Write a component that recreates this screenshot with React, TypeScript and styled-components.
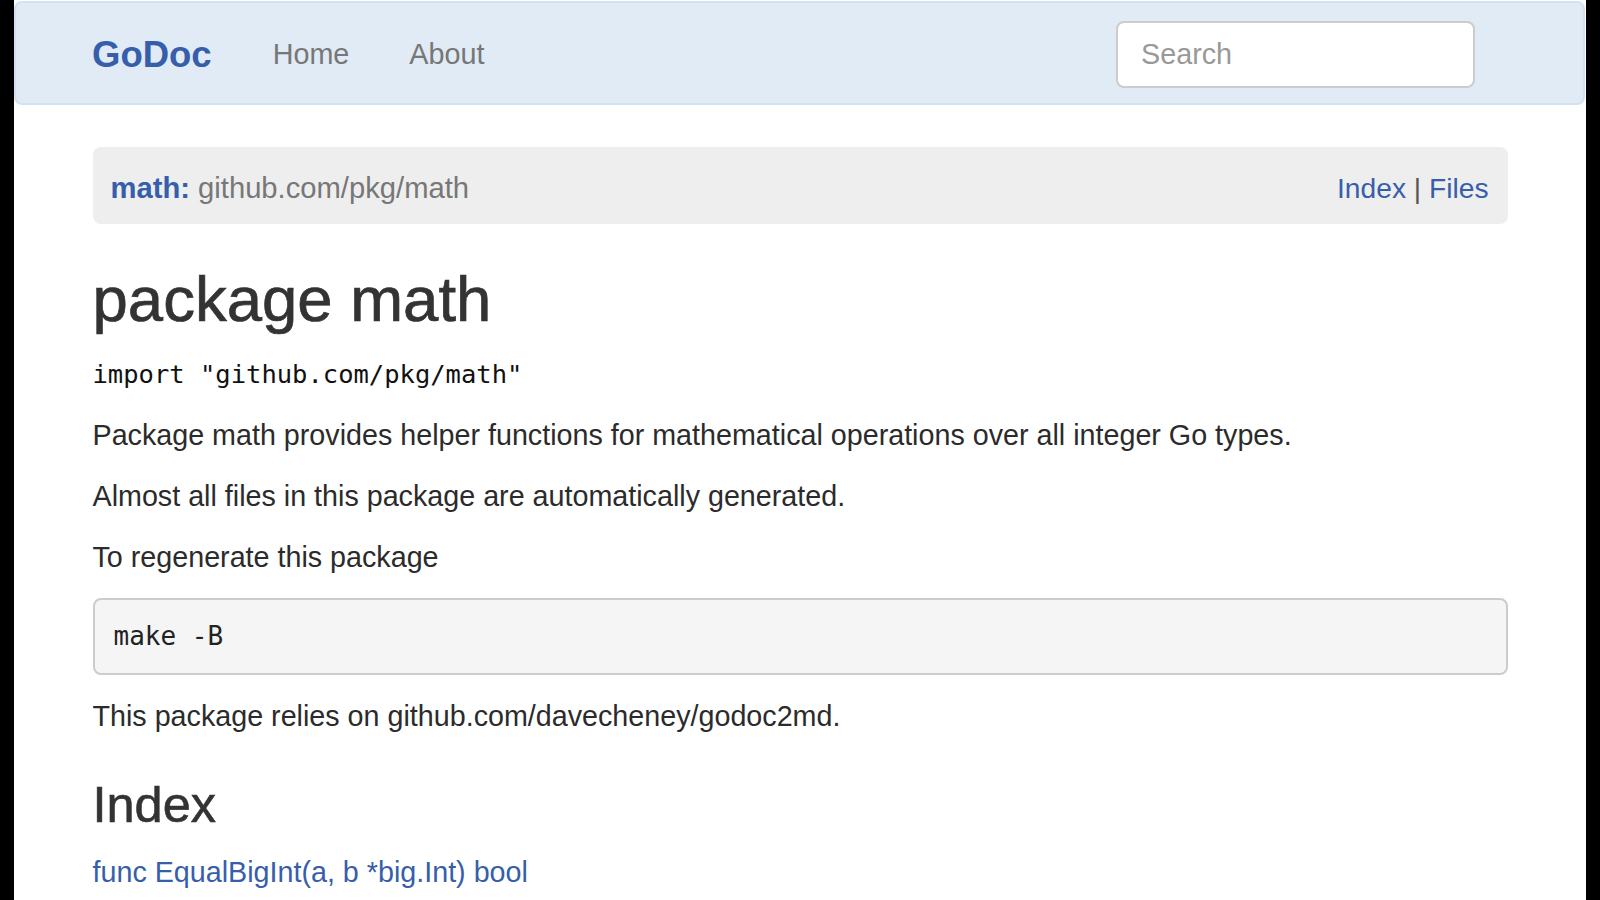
import React from 'react';
import styled, { createGlobalStyle } from 'styled-components';

const GlobalStyle = createGlobalStyle`
  html, body {
    margin: 0;
    padding: 0;
    background: #000;
  }
  body {
    font-family: "Liberation Sans", Helvetica, Arial, sans-serif;
    font-size: 28.7px;
    line-height: 41px;
    color: #333;
  }
  * { box-sizing: border-box; }
`;

const Page = styled.div`
  margin: 0 14px;
  background: #fff;
  height: 100vh;
  padding-top: 1px;
  overflow: hidden;
`;

const Navbar = styled.nav`
  height: 104px;
  background: #e0ebf5;
  border: 2px solid #d3e2f1;
  border-radius: 8px;
  margin: 0 1px 42px 0;
  display: flex;
`;

const NavContainer = styled.div`
  width: 1415px;
  margin: 0 auto;
  display: flex;
  align-items: center;
  padding-top: 2px;
`;

const Brand = styled.a`
  font-size: 36.5px;
  font-weight: 700;
  color: #375eab;
  text-decoration: none;
  margin-right: 61px;
`;

const NavLinks = styled.div`
  display: flex;
  gap: 60px;
`;

const NavLink = styled.a`
  color: #777;
  text-decoration: none;
  font-size: 28.75px;
`;

const SearchInput = styled.input`
  margin-left: auto;
  margin-right: 32px;
  width: 359px;
  height: 67px;
  border: 2px solid #ccc;
  border-radius: 8px;
  background: #fff;
  padding: 0 23px;
  font-family: inherit;
  font-size: 28.75px;
  color: #555;
  outline: none;
  &::placeholder {
    color: #999;
  }
`;

const Container = styled.div`
  width: 1415px;
  margin: 0 auto;
`;

const Crumb = styled.div`
  height: 77px;
  background: #eee;
  border-radius: 8px;
  padding: 5px 19px 0 18px;
  display: flex;
  align-items: center;
  justify-content: space-between;
  margin-bottom: 41px;
  font-size: 29.2px;
`;

const CrumbPath = styled.div`
  color: #777;
`;

const CrumbName = styled.a`
  color: #375eab;
  font-weight: 700;
  text-decoration: none;
`;

const CrumbLinks = styled.div`
  color: #555;
  font-size: 28.2px;
`;

const Link = styled.a`
  color: #375eab;
  text-decoration: none;
`;

const Title = styled.h2`
  font-size: 63.5px;
  line-height: 68px;
  font-weight: 500;
  -webkit-text-stroke: 0.7px #333;
  margin: 40px 0 20px;
  color: #333;
`;

const SectionTitle = styled.h3`
  font-size: 50.5px;
  line-height: 54px;
  font-weight: 500;
  -webkit-text-stroke: 0.6px #333;
  margin: 41px 0 20px;
  color: #333;
`;

const Para = styled.p`
  margin: 0 0 20px;
  color: #2b2b2b;
`;

const Code = styled.code`
  font-family: "DejaVu Sans Mono", Menlo, monospace;
  font-size: 25.5px;
  color: #111;
`;

const Pre = styled.pre`
  margin: 0 0 21px;
  padding: 18px 19px;
  border: 2px solid #ccc;
  border-radius: 8px;
  background: #f5f5f5;
  font-family: "DejaVu Sans Mono", Menlo, monospace;
  font-size: 26px;
  line-height: 37px;
  color: #222;
`;

const IndexList = styled.div`
  display: flex;
  flex-direction: column;
`;

const IndexLink = styled.a`
  color: #375eab;
  text-decoration: none;
  line-height: 41px;
`;

export default function App() {
  return (
    <>
      <GlobalStyle />
      <Page>
        <Navbar>
          <NavContainer>
            <Brand href="#">GoDoc</Brand>
            <NavLinks>
              <NavLink href="#">Home</NavLink>
              <NavLink href="#">About</NavLink>
            </NavLinks>
            <SearchInput placeholder="Search" />
          </NavContainer>
        </Navbar>
        <Container>
          <Crumb>
            <CrumbPath>
              <CrumbName href="#">math:</CrumbName> github.com/pkg/math
            </CrumbPath>
            <CrumbLinks>
              <Link href="#">Index</Link> | <Link href="#">Files</Link>
            </CrumbLinks>
          </Crumb>
          <Title>package math</Title>
          <Para>
            <Code>import "github.com/pkg/math"</Code>
          </Para>
          <Para>
            Package math provides helper functions for mathematical operations over all integer Go types.
          </Para>
          <Para>Almost all files in this package are automatically generated.</Para>
          <Para>To regenerate this package</Para>
          <Pre>make -B</Pre>
          <Para>This package relies on github.com/davecheney/godoc2md.</Para>
          <SectionTitle>Index</SectionTitle>
          <IndexList>
            <IndexLink href="#">func EqualBigInt(a, b *big.Int) bool</IndexLink>
            <IndexLink href="#">func EqualBigFloat(a, b *big.Float) bool</IndexLink>
          </IndexList>
        </Container>
      </Page>
    </>
  );
}
